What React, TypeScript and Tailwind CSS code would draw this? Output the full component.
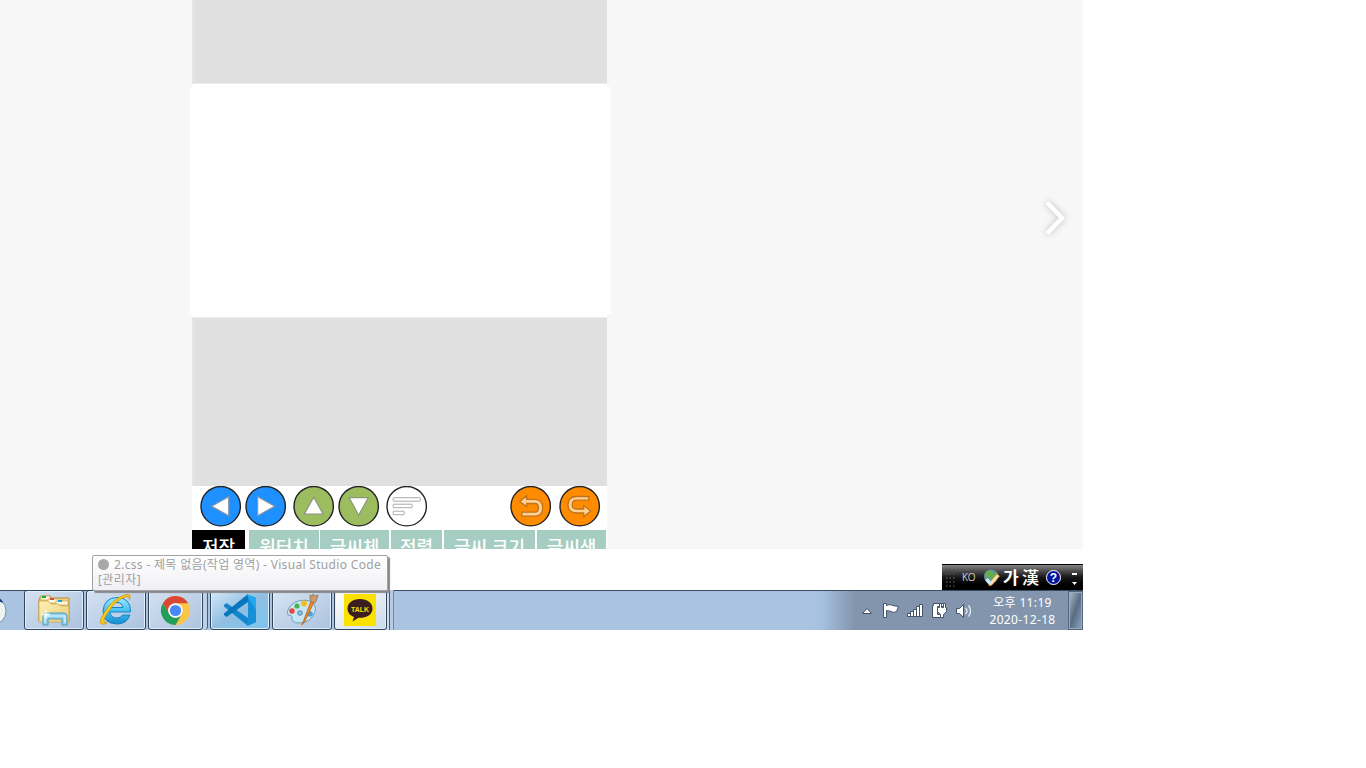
import type { ReactNode } from 'react';

const ui = "font-['Noto_Sans','Noto_Sans_CJK_KR',sans-serif]";

function Round({ color, children }: { color: string; children: ReactNode }) {
  return (
    <svg className="block h-[42px] w-[42px] shrink-0" viewBox="0 0 42 42">
      <circle cx="20.700" cy="20.200" r="19.700" fill={color} stroke="#242424" strokeWidth="1.4" />
      <g transform="translate(-.3 -.8)">{children}</g>
    </svg>
  );
}

function Tab({ label, className }: { label: string; className: string }) {
  return (
    <div className={`h-[19px] shrink-0 overflow-hidden whitespace-nowrap text-center text-[18px] leading-[35px] font-medium text-white ${className}`}>
      {label}
    </div>
  );
}

const undoPath = 'M10 16.3 L17 10.5 V14.2 H25 Q33 14.5 33 22.5 Q33 31 25 31 H12.2 V27 H25 Q28.8 27 28.8 22.5 Q28.8 18.3 25 18.3 H17 V21.3 Z';
const redoPath = 'M32 25.8 L25 31.5 V27.8 H18 Q9.3 27.5 9.3 19.5 Q9.3 11.3 18 11.3 H30 V15 H18 Q13.5 15 13.5 19.5 Q13.5 23.8 18 23.8 H25 V20.3 Z';

function TaskButton({ className, children }: { className: string; children: ReactNode }) {
  return (
    <div className={`flex h-10 shrink-0 items-center justify-center rounded-[3px] border border-[#30465f] shadow-[inset_0_0_0_1px_#e3eefb] ${className}`}>
      {children}
    </div>
  );
}

function Explorer() {
  return (
    <svg className="h-9 w-9" viewBox="0 0 36 36">
      <defs><linearGradient id="folder" x2="1" y2="1"><stop stopColor="#fff1b5" /><stop offset="1" stopColor="#e9cd78" /></linearGradient></defs>
      <path d="M3 29V7l2-3h9l1 2h18v23z" fill="#ead080" stroke="#b78f36" />
      <path d="M5 4h9v4H5z" fill="#fff8df" stroke="#c9a54e" strokeWidth=".7" />
      <path d="M6 4h4v2H6z" fill="#00b638" />
      <path d="M12 7h10v4H12z" fill="#fff8df" stroke="#c9a54e" strokeWidth=".7" />
      <path d="M14 6h4v2h-4z" fill="#d45238" />
      <path d="M20 9h12v4H20z" fill="#fff8df" stroke="#c9a54e" strokeWidth=".7" />
      <path d="M22 8h4v2h-4z" fill="#159edb" />
      <path d="M3 9h9l3 3h7l3 2h8v16H3z" fill="url(#folder)" stroke="#c4a04a" strokeWidth=".7" />
      <path d="M7 33V24q0-3 3-3h18q3 0 3 3v9h-5v-6H12v6z" fill="#92d1ec" stroke="#529bbf" />
      <path d="M9 31v-7h20v7" fill="none" stroke="#dcf7ff" strokeWidth="1.2" />
      <path d="M10 18v9M6 22.500h8" stroke="#f8ffff" strokeWidth="1.3" />
      <path d="M7.500 20l5 5M12.500 20l-5 5" stroke="#f8ffff" strokeWidth=".7" />
    </svg>
  );
}

function InternetExplorer() {
  return (
    <svg className="h-9 w-9" viewBox="0 0 36 36">
      <defs><linearGradient id="ie" x2="0" y2="1"><stop stopColor="#9eeaff" /><stop offset=".55" stopColor="#3dbcf1" /><stop offset="1" stopColor="#188acd" /></linearGradient></defs>
      <path d="M32.500 20H12q.7 6 7 6 4 0 5.500-3h7.500q-3 9-13 9Q5 31.500 5 19 6 6 19 5.500 33 6 32.500 20ZM12.500 15.500H25q-1-5-6-5t-6.500 5Z" fill="url(#ie)" stroke="#1783c1" />
      <path d="M7 32Q-2 34 6 21 15 6 28 2.500q6-1 3.500 5-.2-4-4-2.500-10 3-18 16-7 11-.500 9.500z" fill="#f8cb18" stroke="#c68a08" strokeWidth=".7" />
    </svg>
  );
}

function Chrome() {
  return (
    <svg className="h-[31px] w-[31px]" viewBox="0 0 32 32">
      <circle cx="16" cy="16" r="15" fill="#fbc546" />
      <path d="M3 8.500A15 15 0 0 1 29 8.500H16A7.500 7.500 0 0 0 9.500 20z" fill="#da4737" />
      <path d="M3 8.500A15 15 0 0 0 16 31l6.500-11.200A7.500 7.500 0 0 1 9.500 19.700z" fill="#239d5b" />
      <circle cx="16" cy="16" r="7.500" fill="#f3f6ff" />
      <circle cx="16" cy="16" r="5.800" fill="#4889f4" />
    </svg>
  );
}

function Code() {
  return (
    <svg className="h-8 w-8" viewBox="0 0 32 32">
      <path d="M0 11l2.500-2L24 24v8L0 12.500z" fill="#1285cc" />
      <path d="M0 21l2.500 2L24 8V0L0 19.500z" fill="#0876bd" />
      <path d="M23 0l9 3.500v25L23 32l1-3V3z" fill="#24a9ef" />
      <path d="M24 3v26l-1 3 9-4V16z" fill="#168fd9" />
    </svg>
  );
}

function Paint() {
  return (
    <svg className="h-8 w-9" viewBox="0 0 36 32">
      <path d="M5 14C9 7 18 5 26 7q7 4 5 11-4 11-16 11-8 0-7-6 0-2-4-2-2-3 1-7z" fill="#c7e6f4" stroke="#6e9fb7" />
      <circle cx="8" cy="17" r="2.700" fill="#e7473b" /><circle cx="13" cy="12" r="2.600" fill="#45b44e" /><circle cx="20" cy="9.500" r="3" fill="#f6bb22" />
      <circle cx="16" cy="19" r="2.300" fill="#91bedb" stroke="#5289ad" /><circle cx="26" cy="20" r="2.800" fill="#4c9fe0" />
      <path d="M18 31L27 7l3 1-9 19z" fill="#f18a22" stroke="#b85e1c" strokeWidth=".8" />
      <path d="M26 4V1l2 1 1-2 2 2 3-1-1 4-2 4-4-1z" fill="#c79a72" stroke="#906c50" strokeWidth=".7" />
    </svg>
  );
}

function Talk() {
  return (
    <svg className="mr-[2px] h-8 w-8" viewBox="0 0 32 32">
      <path d="M0 0h32v32H0z" fill="#fae100" />
      <path d="M16 5C8.800 5 3.500 9 3.500 14.500c0 4 2.500 7 6.500 8.500l-1.500 4.500 6-3.700C22 24.200 28.500 21 28.500 14.500 28.500 9 23 5 16 5z" fill="#3a1e20" />
      <text x="16" y="17.500" textAnchor="middle" textLength="18" lengthAdjust="spacingAndGlyphs" fill="#fae100" fontFamily="Liberation Sans, sans-serif" fontSize="7.800" fontWeight="bold">TALK</text>
    </svg>
  );
}

function Tooltip() {
  return (
    <div className="mt-[6px] ml-[92px] h-9 w-[296px] shrink-0 rounded-[2px] border border-[#a2a2a5] bg-linear-to-b from-white to-[#f0f0f5] pl-[5px] pt-px text-[12px] leading-[15px] text-[#a0a0a0] shadow-[2px_2px_1px_#888]">
      <div className="flex items-center whitespace-nowrap">
        <span className="mr-[5px] h-[11px] w-[11px] rounded-full bg-[#a8a8a8]" />
        <span className="tracking-[0.32px]">2.css - 제목 없음(작업 영역) - Visual Studio Code</span>
      </div>
      <div className="tracking-[0.4px]">[관리자]</div>
    </div>
  );
}

function LanguageBar() {
  return (
    <div className="mt-[15px] flex h-[26px] w-[141px] shrink-0 items-center border-t border-black bg-linear-to-b from-[#858585] via-[#171717] via-50% to-black text-white">
      <svg className="ml-[3px] h-[22px] w-3" viewBox="0 0 12 22">
        <path d="M1 3h10M1 7h10M1 11h10M1 15h10M1 19h10" stroke="#4d4d4d" strokeWidth="1.500" strokeDasharray="1.500 2" />
      </svg>
      <span className="ml-[5px] w-[17px] text-[10px] font-light">KO</span>
      <svg className="ml-[4px] h-[18px] w-[18px]" viewBox="0 0 18 18">
        <circle cx="8" cy="7.500" r="7" fill="#5c91b3" /><path d="M2 4l5-3 4 3-4 4-4 1zM8 7l6-4 1 6-5 4-3-2z" fill="#65ad45" /><path d="M7 13l7-8 2.500 2-7.500 9-3 1z" fill="#f8e6ac" stroke="#d37835" strokeWidth=".7" /><path d="M2 11l3-2 4 5-3 2z" fill="#cce8f7" />
      </svg>
      <span className="ml-[2px] w-[19px] text-[17px] font-bold">가</span>
      <span className="w-[20px] text-[17px] font-medium">漢</span>
      <span className="ml-[4px] flex h-[15px] w-[15px] items-center justify-center rounded-full border border-white bg-[#00149c] font-['Liberation_Sans',sans-serif] text-[12px] font-bold">?</span>
      <svg className="ml-[9px] h-5 w-[9px]" viewBox="0 0 9 20"><path d="M2 5h5v2H2zM2 14h5l-2.500 3z" fill="white" /></svg>
    </div>
  );
}

export default function App() {
  return (
    <main className={`h-[768px] w-[1366px] overflow-hidden bg-white ${ui}`}>
      <section className="flex h-[549px] w-[1083px] overflow-hidden bg-[#f7f7f7]">
        <div className="ml-[190px] w-[421px]">
          <div className="ml-[2px] h-[84px] w-[415px] border-b border-l-[3px] border-b-[#eee] border-l-[#e4e4e4] bg-[#e0e0e0]" />
          <div className="ml-[2px] h-[3px] w-[415px] bg-white" />
          <div className="h-[227px] bg-white" />
          <div className="ml-[2px] h-[3px] w-[415px] bg-white" />
          <div className="ml-[2px] h-[169px] w-[415px] border-t border-l-[3px] border-t-[#eee] border-l-[#e4e4e4] bg-[#e0e0e0]" />
          <div className="ml-[2px] h-[63px] w-[415px] bg-white">
            <div className="flex h-[44px] pl-[8px]">
              <Round color="#1e90ff"><path d="M12 21L29 11.500V30.500z" fill="white" stroke="#8997a7" strokeWidth="1.200" /></Round>
              <div className="ml-[3px]"><Round color="#1e90ff"><path d="M30 21L13 11.500V30.500z" fill="white" stroke="#8997a7" strokeWidth="1.200" /></Round></div>
              <div className="ml-[6px]"><Round color="#9bbd5f"><path d="M21 12L30.500 29H11.500z" fill="white" stroke="#8c967c" strokeWidth="1.200" /></Round></div>
              <div className="ml-[3px]"><Round color="#9bbd5f"><path d="M21 30L30.500 12.500H11.500z" fill="white" stroke="#8c967c" strokeWidth="1.200" /></Round></div>
              <div className="ml-[6px]"><Round color="#ffffff"><g fill="white" stroke="#aaa"><rect x="7.500" y="12.500" width="27" height="3.500" rx=".6" /><rect x="7.500" y="19" width="19" height="3.500" rx=".6" /><rect x="7.500" y="26" width="11" height="3.500" rx=".6" /></g></Round></div>
              <div className="ml-[82px]"><Round color="#ff8c00"><path d={undoPath} fill="#ffd091" stroke="#bf731d" strokeWidth="1.300" /></Round></div>
              <div className="ml-[7px]"><Round color="#ff8c00"><path d={redoPath} fill="#ffd091" stroke="#bf731d" strokeWidth="1.300" /></Round></div>
            </div>
            <div className="flex h-[19px] overflow-hidden">
              <Tab label="저장" className="w-[53px] bg-black" />
              <Tab label="원터치" className="ml-[4px] w-[70px] bg-[#a5cdc1]" />
              <Tab label="글씨체" className="ml-px w-[69px] bg-[#a5cdc1]" />
              <Tab label="정렬" className="ml-[2px] w-[51px] bg-[#a5cdc1]" />
              <Tab label="글씨 크기" className="ml-[2px] w-[91px] bg-[#a5cdc1]" />
              <Tab label="글씨색" className="ml-[2px] w-[69px] bg-[#a5cdc1]" />
            </div>
          </div>
        </div>
        <div className="ml-auto mr-[7px] mt-[193px] h-[50px] w-[40px]">
          <svg className="h-[50px] w-[40px]" viewBox="0 0 40 50">
            <path d="M11 9.500L26 25 11 40.500" fill="none" stroke="white" strokeWidth="4.500" style={{ filter: 'drop-shadow(0 0 3px #bbb)' }} />
          </svg>
        </div>
      </section>
      <section className="relative z-10 flex h-[41px] w-[1083px] items-start justify-between">
        <Tooltip /><LanguageBar />
      </section>
      <footer className="flex h-10 w-[1083px] border-t border-[#394d63] bg-linear-to-r from-[#a9c3e1] from-75% via-[#a4bfdd] via-76% to-[#8295ad] to-79%">
        <svg className="h-10 w-6 shrink-0" viewBox="0 0 24 40"><circle cx="-8" cy="20" r="14" fill="#edf4f2" stroke="#7594a2" /><path d="M-4 6q6 1 7 6l-5-2z" fill="#123c7b" /></svg>
        <div className="-mt-px flex h-10">
          <TaskButton className="w-[60px] bg-linear-to-br from-[#d5e1f1] to-[#abc3df]"><Explorer /></TaskButton>
          <TaskButton className="ml-[2px] w-[60px] bg-linear-to-br from-[#d5e1f1] to-[#abc3df]"><InternetExplorer /></TaskButton>
          <TaskButton className="ml-[2px] w-[55px] bg-linear-to-br from-[#d3e0f0] to-[#adc4df]"><Chrome /></TaskButton>
          <div className="h-10 w-[5px] rounded-r border-r border-[#435b77] bg-[#bdd0e6]" />
          <TaskButton className="ml-[2px] w-[60px] bg-linear-to-br from-[#d4e8f8] via-[#91bfe2] to-[#78c5f0]"><Code /></TaskButton>
          <TaskButton className="ml-[2px] w-[60px] bg-linear-to-br from-[#d7e3f2] to-[#abc3df]"><Paint /></TaskButton>
          <TaskButton className="ml-[2px] w-[53px] bg-linear-to-br from-white to-[#cbd9e9]"><Talk /></TaskButton>
          <div className="h-10 w-[3px] border-r border-[#435b77] bg-[#d0dcec]" />
          <div className="h-10 w-1 border-r border-[#7189a4] bg-[#b7cae1]" />
        </div>
        <div className="ml-auto flex h-[39px] items-center">
          <svg className="h-[28px] w-[116px]" viewBox="0 0 116 28">
            <g stroke="#43546a" fill="white">
              <path d="M6.500 16.500l4.500-5 4.500 5z" />
              <path d="M27.500 6.500h3v2q4-2 6 0l6 1-2 5q-3 2-5 0l-5-1v7h-3z" />
              <path d="M51.500 16.500h3v3h-3zM54.500 14.500h3v5h-3zM57.500 12.500h3v7h-3zM60.500 9.500h3v10h-3zM63.500 7.500h3v12h-3z" />
              <path d="M77.500 6.500h10v3h-6v8h5v3h-10V8.500h1z" /><path d="M81.500 10.500h2v-4h2v4h2v-4h2v4h1v4l-3 3v3h-3v-3l-3-3z" />
              <path d="M100.500 11.500h3l4-4v13l-4-4h-3z" />
            </g>
            <path d="M109.500 11q3 3 0 6M112.500 8.500q4 5.500 0 11" fill="none" stroke="#e5edf6" strokeWidth="1.300" />
          </svg>
          <div className="ml-[14px] mr-[9px] w-[73px] whitespace-nowrap text-center text-[12px] leading-[17px] tracking-[0.35px] text-white"><div>오후 11:19</div><div>2020-12-18</div></div>
          <div className="h-[39px] w-[15px] border border-[#52667f] bg-linear-to-br from-[#aebfd1] via-[#596c82] to-[#91a8c2] shadow-[inset_0_0_0_1px_#99a9bb]" />
        </div>
      </footer>
    </main>
  );
}
